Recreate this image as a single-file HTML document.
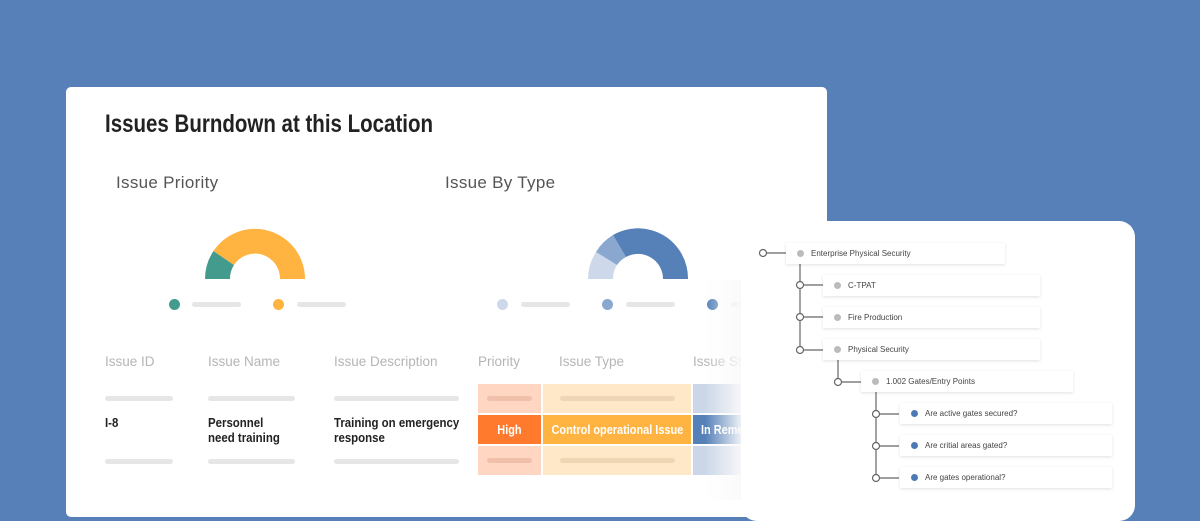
<!DOCTYPE html>
<html><head><meta charset="utf-8"><style>
*{margin:0;padding:0;box-sizing:border-box}
body{width:1200px;height:500px;background:#5780b8;position:relative;overflow:hidden;font-family:"Liberation Sans",sans-serif}
.card{position:absolute;left:66px;top:87px;width:761px;height:430px;background:#fff;border-radius:5px}
.a{position:absolute;white-space:nowrap}
.title{left:105px;top:110px;font-size:25px;font-weight:bold;color:#222;transform:scaleX(.82);transform-origin:left}
.sub{font-size:17px;color:#555;letter-spacing:.3px}
.hd{font-size:13.5px;color:#b5b5b5;top:354px}
.bar{position:absolute;height:5px;border-radius:3px;background:#e6e6e6}
.bt{font-size:13px;font-weight:bold;color:#222;transform:scaleX(.88);transform-origin:left;line-height:15px}
.cell{position:absolute;display:flex;align-items:center;justify-content:center;color:#fff;font-weight:bold;font-size:13px;white-space:nowrap;overflow:hidden}
.cell span{display:inline-block;transform:scaleX(.84)}
.dot{position:absolute;width:11px;height:11px;border-radius:50%}
.panel{position:absolute;left:741px;top:221px;width:394px;height:300px;background:#fff;border-radius:16px}
.fade{position:absolute;left:705px;top:280px;width:37px;height:220px;background:linear-gradient(to right,rgba(255,255,255,0),rgba(250,250,250,.95))}
.node{position:absolute;height:21px;background:#fff;box-shadow:0 1px 3px rgba(0,0,0,.12);font-size:8px;color:#444;display:flex;align-items:center;padding-left:11px}
.node i{width:7px;height:7px;border-radius:50%;background:#bbb;margin-right:7px;display:inline-block}
.node i.b{background:#4e77b5}
</style></head><body>
<div class="card"></div>
<div class="a title">Issues Burndown at this Location</div>
<div class="a sub" style="left:116px;top:173px">Issue Priority</div>
<div class="a sub" style="left:445px;top:173px">Issue By Type</div>
<svg class="a" style="left:0;top:0" width="1200" height="500">
<path d="M205 279 A50 50 0 0 1 213.5 251 L234 265 A25 25 0 0 0 230 279 Z" fill="#439b8e"/>
<path d="M213.5 251 A50 50 0 0 1 305 279 L280 279 A25 25 0 0 0 234 265 Z" fill="#ffb340"/>
<path d="M588 279 A50 50 0 0 1 596 252 L617 265 A25 25 0 0 0 613 279 Z" fill="#cdd9ea"/>
<path d="M596 252 A50 50 0 0 1 613 235 L626 257 A25 25 0 0 0 617 265 Z" fill="#89a7cf"/>
<path d="M613 235 A50 50 0 0 1 688 279 L663 279 A25 25 0 0 0 626 257 Z" fill="#5580b8"/>
</svg>
<div class="dot" style="left:169px;top:299px;background:#439b8e"></div><div class="bar" style="left:192px;top:302px;width:49px"></div>
<div class="dot" style="left:273px;top:299px;background:#ffb340"></div><div class="bar" style="left:297px;top:302px;width:49px"></div>
<div class="dot" style="left:497px;top:299px;background:#cdd9ea"></div><div class="bar" style="left:521px;top:302px;width:49px"></div>
<div class="dot" style="left:602px;top:299px;background:#89a7cf"></div><div class="bar" style="left:626px;top:302px;width:49px"></div>
<div class="dot" style="left:707px;top:299px;background:#5580b8"></div><div class="bar" style="left:731px;top:302px;width:20px"></div>

<div class="a hd" style="left:105px">Issue ID</div>
<div class="a hd" style="left:208px">Issue Name</div>
<div class="a hd" style="left:334px">Issue Description</div>
<div class="a hd" style="left:478px">Priority</div>
<div class="a hd" style="left:559px">Issue Type</div>
<div class="a hd" style="left:693px">Issue Status</div>

<div class="bar" style="left:105px;top:396px;width:68px"></div>
<div class="bar" style="left:208px;top:396px;width:87px"></div>
<div class="bar" style="left:334px;top:396px;width:125px"></div>
<div class="bar" style="left:105px;top:459px;width:68px"></div>
<div class="bar" style="left:208px;top:459px;width:87px"></div>
<div class="bar" style="left:334px;top:459px;width:125px"></div>
<div class="a bt" style="left:105px;top:415px">I-8</div>
<div class="a bt" style="left:208px;top:415px">Personnel<br>need training</div>
<div class="a bt" style="left:334px;top:415px">Training on emergency<br>response</div>

<div class="cell" style="left:478px;top:384px;width:63px;height:29px;background:#ffd6c2"><div class="bar" style="position:static;width:45px;background:#f0c0aa"></div></div>
<div class="cell" style="left:543px;top:384px;width:148px;height:29px;background:#ffe8c7"><div class="bar" style="position:static;width:115px;background:#eed6b5"></div></div>
<div class="cell" style="left:693px;top:384px;width:60px;height:29px;background:#cbd7e8"></div>
<div class="cell" style="left:478px;top:415px;width:63px;height:29px;background:#ff7a2c"><span>High</span></div>
<div class="cell" style="left:543px;top:415px;width:148px;height:29px;background:#ffb340"><span>Control operational Issue</span></div>
<div class="cell" style="left:693px;top:415px;width:60px;height:29px;background:#5580b8;justify-content:flex-start;padding-left:8px"><span style="transform-origin:left">In Remed</span></div>
<div class="cell" style="left:478px;top:446px;width:63px;height:29px;background:#ffd6c2"><div class="bar" style="position:static;width:45px;background:#f0c0aa"></div></div>
<div class="cell" style="left:543px;top:446px;width:148px;height:29px;background:#ffe8c7"><div class="bar" style="position:static;width:115px;background:#eed6b5"></div></div>
<div class="cell" style="left:693px;top:446px;width:60px;height:29px;background:#cbd7e8"></div>
<div class="fade"></div>

<div class="panel"></div>
<svg class="a" style="left:0;top:0" width="1200" height="500" fill="none" stroke="#666" stroke-width="1.2">
<path d="M767 253H786M800 263V350M804 285H823M804 317H823M804 350H823M838 360V382M842 382H861M876 392V478M880 414H899M880 446H899M880 478H899"/>
<g fill="#fff"><circle cx="763" cy="253" r="3.5"/><circle cx="800" cy="285" r="3.5"/><circle cx="800" cy="317" r="3.5"/><circle cx="800" cy="350" r="3.5"/><circle cx="838" cy="382" r="3.5"/><circle cx="876" cy="414" r="3.5"/><circle cx="876" cy="446" r="3.5"/><circle cx="876" cy="478" r="3.5"/></g>
</svg>
<div class="node" style="left:786px;top:243px;width:219px"><i></i>Enterprise Physical Security</div>
<div class="node" style="left:823px;top:275px;width:217px"><i></i>C-TPAT</div>
<div class="node" style="left:823px;top:307px;width:217px"><i></i>Fire Production</div>
<div class="node" style="left:823px;top:339px;width:217px"><i></i>Physical Security</div>
<div class="node" style="left:861px;top:371px;width:212px"><i></i>1.002 Gates/Entry Points</div>
<div class="node" style="left:900px;top:403px;width:212px"><i class="b"></i>Are active gates secured?</div>
<div class="node" style="left:900px;top:435px;width:212px"><i class="b"></i>Are critial areas gated?</div>
<div class="node" style="left:900px;top:467px;width:212px"><i class="b"></i>Are gates operational?</div>
</body></html>
